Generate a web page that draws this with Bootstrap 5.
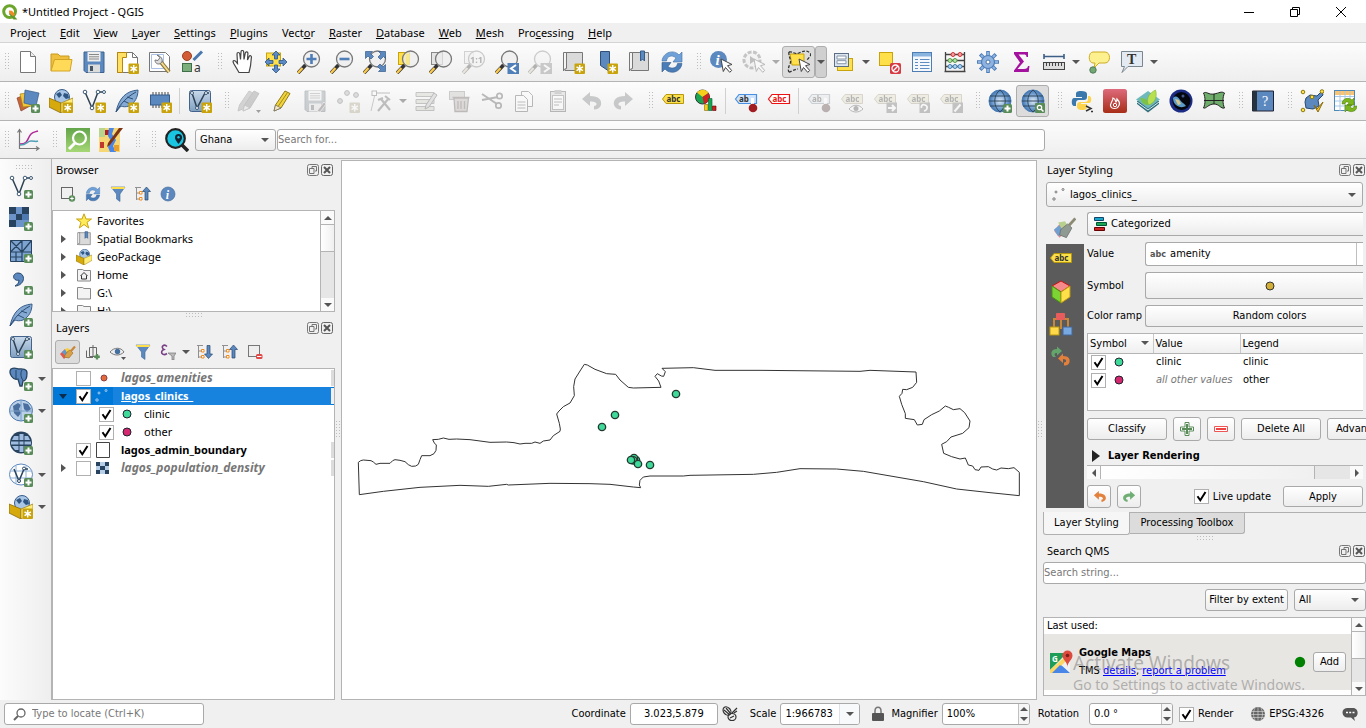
<!DOCTYPE html>
<html lang="en">
<head>
<meta charset="utf-8">
<meta name="viewport" content="width=device-width, initial-scale=1">
<title>*Untitled Project - QGIS</title>
<link href="https://cdn.jsdelivr.net/npm/bootstrap@5.3.0/dist/css/bootstrap.min.css" rel="stylesheet">
<style>
:root{--edge:#b4b4b4;--dotv:repeating-linear-gradient(#bdbdbd 0 1px,transparent 1px 3px);--doth:repeating-linear-gradient(90deg,#bdbdbd 0 1px,transparent 1px 3px)}
body{font:11px/18px "Noto Sans","Open Sans",sans-serif;color:#000;background:#f0f0f0}
button,input,select,table{font:inherit;color:inherit}
.ui,.ui button,.ui input,.ui select{font-family:"DejaVu Sans Condensed","DejaVu Sans",sans-serif}
svg{display:block;flex:none}
.i24{width:24px;height:24px}
.i16{width:16px;height:16px}
.i12{width:12px;height:12px}
.off{filter:grayscale(.8);opacity:.34}
.titlebar{height:23px;background:#fff;padding-left:2px}
.titlebar .cap{width:46px;height:23px;border:0;background:none;padding:0}
.titlebar .cap:last-child{margin-right:2px}
.menus{height:20px;border-bottom:1px solid #d4d4d4;padding-left:3px}
.menus a{color:#000;text-decoration:none;padding:0 7px}
.tools{height:39px;border-bottom:1px solid var(--edge);background:linear-gradient(#fcfcfc,#eee)}
.tools.third{height:38px}
.tb{width:33px;height:32px;border:1px solid transparent;border-radius:3px;background:none;padding:0;display:flex;align-items:center;justify-content:center;flex:none}
.tb.small-tb{width:25px;height:24px}
.tb.down{background:#dcdcdc;border-color:#adadad}
.arr{width:12px;height:32px;border:1px solid transparent;background:none;padding:0;display:flex;align-items:center;justify-content:center;flex:none}
.arr::before,.tri::before{content:"";border:4px solid transparent;border-top-color:#555;border-bottom:0}
.arr.dim::before{border-top-color:#aaa}
.arr.down{background:#d0d0d0;border-color:#adadad;border-radius:3px}
.grip{width:16px;height:18px;flex:none;background:var(--dotv) 9px 0/1px 18px no-repeat,var(--dotv) 12px 0/1px 18px no-repeat}
.grip.first{width:11px;background-position:5px 0,8px 0}
.grip.wide{width:17px}
.dots{height:4px;width:16px;background:var(--doth) 0 0/16px 1px no-repeat,var(--doth) 0 3px/16px 1px no-repeat}
.vdots{width:4px;height:18px;background:var(--dotv) 0 0/1px 18px no-repeat,var(--dotv) 3px 0/1px 18px no-repeat}
.vsep{width:1px;height:26px;background:#d0d0d0;margin:0 3px;flex:none}
.side{width:52px;border-right:1px solid var(--edge);background:linear-gradient(90deg,#fcfcfc,#eee);padding-top:6px}
.side .line{height:32px;padding-left:4px}
.side .arr{margin-left:-1px}
.dock-l{width:283px}
.dock-r{width:323px}
.dockhead{height:22px;padding:0 2px 0 4px}
.dockhead button{border:0;background:none;padding:0;width:12px;height:12px}
.dockhead .pair{display:flex;gap:2px;margin-left:auto}
.dock-r .dockhead{padding-right:1px;font-family:"Noto Sans","Open Sans",sans-serif}
.smallbar{height:29px;padding:0 0 3px 3px}
.well{background:#fff;border:1px solid var(--edge)}
.trow{height:18px;display:flex;align-items:center;white-space:nowrap;gap:3px}
.trow label,.trow .cap-t{padding-left:2px}
.tw{width:20px;display:flex;justify-content:center;flex:none}
.tw::before{content:"";border:4px solid transparent;border-left:5px solid #555;border-right:0}
.tw.none::before{visibility:hidden}
.tw.open::before{border:4px solid transparent;border-top:5px solid #0b2c4d;border-bottom:0}
.chk{appearance:none;width:15px;height:15px;border:1px solid #b0b0b0;background:#fff center/11px 11px no-repeat;margin:0;flex:none}
.chk:checked{background-image:url("data:image/svg+xml,%3Csvg xmlns='http://www.w3.org/2000/svg' viewBox='0 0 11 11'%3E%3Cpath d='M1.5 5.2l2.8 4L9.5 1' fill='none' stroke='%23000' stroke-width='2'/%3E%3C/svg%3E")}
.tag{width:3px;height:16px;background:#dcdcdc;margin-left:auto;flex:none}
.sel{background:#0078d7;color:#fff}
.sel .nm{background:#1883de;flex:1;height:18px}
.sel .tag{background:#f0f0f0;margin-left:-3px}
.mut{color:#777;font-style:italic}
.trow .mut{font-size:12px}
.gb{background:linear-gradient(#fff,#ededed);border:1px solid #a9a9a9;border-radius:3px;padding:0;white-space:nowrap}
.fld{background:#fff;border:1px solid #a9a9a9;border-radius:3px;display:flex;align-items:center;overflow:hidden}
.fld input{border:0;background:none;outline:0;min-width:0;padding:0 4px;width:100%}
.fld input::placeholder{color:#777;opacity:1}
.pick{border:0;background:none;appearance:none;outline:0;padding:0;flex:1;min-width:0}
.tri{display:flex;width:20px;justify-content:center;flex:none}
.cut{border-right:0;border-top-right-radius:0;border-bottom-right-radius:0}
.under{padding-left:30px}
.sb{background:#e6e6e6;display:flex;flex:none}
.sb.v{width:14px;flex-direction:column;border-left:1px solid var(--edge)}
.sb.h{height:14px;border-top:1px solid var(--edge)}
.sb button{border:0;background:#fafafa;padding:0;width:13px;height:13px;display:flex;align-items:center;justify-content:center;flex:none}
.sb .thumb{background:linear-gradient(90deg,#fff,#f0f0f0)}
.sb.v .thumb{border-top:1px solid var(--edge);border-bottom:1px solid var(--edge);height:28px}
.sb.h .thumb{border-left:1px solid var(--edge);border-right:1px solid var(--edge);width:78%}
.up::before{content:"";border:4px solid transparent;border-bottom:4px solid #555;border-top:0}
.dn::before{content:"";border:4px solid transparent;border-top:4px solid #555;border-bottom:0}
.lf::before{content:"";border:4px solid transparent;border-right:4px solid #555;border-left:0}
.rt::before{content:"";border:4px solid transparent;border-left:4px solid #555;border-right:0}
.form-col{gap:6px;padding:5px 3px 0 3px;min-width:0}
.form-col>*{flex-shrink:0}
.form-col .cap-l{width:58px;flex:none}
.fold-t::before{content:"";border:6px solid transparent;border-left:8px solid #222;border-right:0;margin:0 8px 0 5px}
.cls{border-collapse:collapse;width:100%;table-layout:fixed}
.cls th{font-weight:400;height:19px;padding:0 2px;background:linear-gradient(#fff,#efefef);border-bottom:1px solid var(--edge);line-height:17px}
.cls th+th{border-left:1px solid #c8c8c8}
.cls td{height:18px;padding:0 3px;line-height:16px;white-space:nowrap}
.strip{width:38px;flex:none}
.dark{background:#5b5b5b}
.dark .line{height:32px;padding-right:8px}
.tabs button{border:1px solid #b0b0b0;border-top:0;padding:0;height:21px}
.tabs{border-top:1px solid #b0b0b0;margin-top:4px}
.tabs .on{background:#f6f6f6;height:23px;margin-top:-1px;border-radius:0 0 3px 3px;width:87px}
.tabs .offt{background:#dcdcdc;border-left:0;border-radius:0 0 3px 0;width:115px}
.qitem{background:#e8e6e3;height:56px;line-height:18px}
.qitem a{color:#00f}
.wm{position:absolute;left:29px;top:33px;color:rgba(120,120,120,.52);font-family:"Noto Sans","Open Sans",sans-serif;pointer-events:none;white-space:nowrap}
.wm .big{font-size:19px;line-height:24px}
.wm .sml{font-size:14px;line-height:20px}
.spin{width:13px;border-left:1px solid #c0c0c0;align-self:stretch}
.spin button{border:0;background:#f6f6f6;padding:0;flex:1;display:flex;align-items:center;justify-content:center}
.status{height:28px}
.status .fld{height:22px}
.w-pt{width:88px;margin-left:4px}
</style>
</head>
<body>
<svg width="0" height="0" class="position-absolute" aria-hidden="true">
<linearGradient id="gb1" x1="0" y1="0" x2="0" y2="1"><stop offset="0" stop-color="#c9d9ea"/><stop offset="1" stop-color="#7f9fc0"/></linearGradient>
<linearGradient id="gr1" x1="0" y1="0" x2="0" y2="1"><stop offset="0" stop-color="#de6a7c"/><stop offset="1" stop-color="#a82d17"/></linearGradient>
<linearGradient id="gg1" x1="0" y1="0" x2="0" y2="1"><stop offset="0" stop-color="#63a54a"/><stop offset="1" stop-color="#a6d775"/></linearGradient>
<radialGradient id="sph"><stop offset="0" stop-color="#dfe9f4"/><stop offset=".6" stop-color="#7ba7d6"/><stop offset="1" stop-color="#3f73ae"/></radialGradient>
</svg>
<svg class="d-none" aria-hidden="true">
<symbol id="plus" viewBox="0 0 24 24"><rect x="15" y="15" width="9" height="9" rx="1.5" fill="#5a8c5a"/><path d="M19.5 16.5v6M16.5 19.5h6" stroke="#fff" stroke-width="2"/></symbol>
<symbol id="new" viewBox="0 0 24 24"><rect x="13.5" y="13.5" width="10.500" height="10.500" rx="1" fill="#c8a30c"/><path d="M18.7 15v7.500M15.500 16.800l6.400 3.900M21.900 16.800l-6.400 3.900" stroke="#fff" stroke-width="1.500"/></symbol>
<symbol id="cur" viewBox="0 0 24 24"><path d="M12 9l11 5.500-4.500 1.200 4.200 4.800-2 1.800-4.200-4.800-2.200 4z" fill="#fff" stroke="#444"/></symbol>
<symbol id="lens" viewBox="0 0 24 24"><path d="M1 23l7.500-8" stroke="#333" stroke-width="3.600"/><path d="M1 23l4.500-5" stroke="#fcc94a" stroke-width="2.400"/><circle cx="14.500" cy="9" r="8" fill="#eee" fill-opacity=".75" stroke="#777" stroke-width="1.300"/></symbol>
<symbol id="logo" viewBox="0 0 16 16"><circle cx="7.600" cy="7.600" r="5.900" fill="none" stroke="#6ba52c" stroke-width="3"/><path d="M8 8l7.500 7.500h-4L7 10z" fill="#5f9a2a"/><path d="M7 6.500l3 .2 3 3.500-2 2-4-3.500z" fill="#f08b24"/></symbol>
<symbol id="doc" viewBox="0 0 24 24"><path d="M4.500 1.500h10l5 5v16h-15z" fill="#fff" stroke="#777"/><path d="M14.500 1.500v5h5" fill="#eee" stroke="#777"/></symbol>
<symbol id="folder" viewBox="0 0 24 24"><path d="M2 20.500V4h7l2 2h9v14.500z" fill="#efc03d" stroke="#c99a1b"/><path d="M5.500 9.500H23l-2 11.500H2z" fill="#ffda59" stroke="#d3a423"/></symbol>
<symbol id="save" viewBox="0 0 24 24"><path d="M2 2h20v20.500H4l-2-2z" fill="#5b88bf" stroke="#3f628c"/><rect x="5.500" y="2" width="13" height="9.500" fill="#eee"/><path d="M7 4.500h10M7 6.800h10M7 9h10" stroke="#888"/><rect x="6" y="14.500" width="12" height="8" fill="#dcdcdc"/><rect x="8" y="16" width="3" height="5" fill="#456"/></symbol>
<symbol id="layout" viewBox="0 0 24 24"><path d="M2.500 2.500h15l5 5v15h-20z" fill="#fff" stroke="#777"/><path d="M2.500 2.500h9v5h-4v15h-5z" fill="#ffe066" stroke="#b8860b"/><path d="M17.500 2.500v5h5" fill="none" stroke="#777"/><use href="#new"/></symbol>
<symbol id="lman" viewBox="0 0 24 24"><path d="M1.500 2.500h16l4 4v15h-20z" fill="#fff" stroke="#777"/><path d="M3.500 4.500h12v14h-12z" fill="none" stroke="#a9c1e6"/><path d="M12 11l9 11" stroke="#8a7440" stroke-width="4"/><path d="M13 12l8 10" stroke="#f2dc8a" stroke-width="2"/><path d="M9 5l3 2.500-2 3L7 10c0 4 4 5 6 3s2-6-4-8z" fill="#ddd" stroke="#777"/></symbol>
<symbol id="style" viewBox="0 0 24 24"><circle cx="6" cy="6" r="4.500" fill="#d15c35" stroke="#9a3f20"/><path d="M12.500 10L21 1.500" stroke="#4a78ad" stroke-width="3"/><rect x="1.500" y="13.500" width="9" height="8" fill="#7cae7c" stroke="#3f6f4a"/><text x="13" y="22" font-size="12" font-family="Noto Sans,sans-serif" fill="#333">a</text></symbol>
<symbol id="hand" viewBox="0 0 24 24"><path d="M8 22.500L3 14c-1-2-1.500-3 0-3.500 1.500-.2 2.500 2 3.500 3L6 4c0-2 2.500-2 2.800 0l.7 5.500L10 2c0-2 2.600-2 2.700 0l.3 7.500L14.300 3c.3-1.800 2.700-1.500 2.600.3L16.500 10l1.600-3.500c.8-1.400 2.500-.7 2.300.8L19.500 16l-1.500 6.500z" fill="#fff" stroke="#444" stroke-width="1.200"/></symbol>
<symbol id="pan" viewBox="0 0 24 24"><rect x="2.500" y="3" width="14" height="13" fill="#ffe04a" stroke="#c8a30c"/><path d="M12 1l4 4h-2.500v4h-3V5H8zM12 23l4-4h-2.500v-4h-3v4H8zM1 12l4-4v2.500h4v3H5V16zM23 12l-4-4v2.500h-4v3h4V16z" fill="#5b8ac6" stroke="#2f5683" stroke-width=".8"/></symbol>
<symbol id="zin" viewBox="0 0 24 24"><use href="#lens"/><path d="M14.500 4v10M9.500 9h10" stroke="#4f7db5" stroke-width="2.600"/></symbol>
<symbol id="zout" viewBox="0 0 24 24"><use href="#lens"/><path d="M9.500 9h10" stroke="#4f7db5" stroke-width="2.600"/></symbol>
<symbol id="zfull" viewBox="0 0 24 24"><use href="#lens"/><path d="M2.500 1.500h7l-2 2 3 3-2.500 2.500-3-3-2.500 2.500zM22.500 1.500v7l-2-2-3 3L15 7l3-3-2.500-2.500zM22.500 21.500h-7l2-2-3-3L17 14l3 3 2.500-2.500z" fill="#5b88bf" stroke="#365c8a" stroke-width=".7"/></symbol>
<symbol id="zsel" viewBox="0 0 24 24"><rect x="2.500" y="2.500" width="11" height="12" fill="#ffe04a" stroke="#c8a30c"/><use href="#lens"/><path d="M10 4h3.500v10.500H10z" fill="#f7e68a"/></symbol>
<symbol id="zlay" viewBox="0 0 24 24"><rect x="2.500" y="2.500" width="11" height="12" fill="#e4e4e4" stroke="#888"/><use href="#lens"/></symbol>
<symbol id="znat" viewBox="0 0 24 24"><rect x="2.500" y="1.500" width="9" height="12" fill="#eee" stroke="#888"/><use href="#lens"/><text x="8" y="12.500" font-size="9" font-weight="700" font-family="Noto Sans,sans-serif" fill="#333">1:1</text></symbol>
<symbol id="zlast" viewBox="0 0 24 24"><use href="#lens"/><rect x="12.500" y="13" width="11.500" height="11" fill="#4f7fb8"/><path d="M21 15l-5 3.500 5 3.500" fill="none" stroke="#fff" stroke-width="2"/></symbol>
<symbol id="znext" viewBox="0 0 24 24"><use href="#lens"/><rect x="12.500" y="13" width="11.500" height="11" fill="#777"/><path d="M16 15l5 3.500-5 3.500" fill="none" stroke="#fff" stroke-width="2"/></symbol>
<symbol id="book" viewBox="0 0 24 24"><path d="M4 2.500h17.500v18H4z" fill="#dadada" stroke="#777"/><path d="M2.500 2.500h3v16c-1.500 0-3 1-3 2.500z" fill="#f4f4f4" stroke="#777"/></symbol>
<symbol id="bkm" viewBox="0 0 24 24"><use href="#book"/><path d="M13.500 1h4v10l-2-2-2 2z" fill="#5b88bf" stroke="#365c8a"/></symbol>
<symbol id="bknew" viewBox="0 0 24 24"><use href="#book"/><use href="#new"/></symbol>
<symbol id="rib" viewBox="0 0 24 24"><path d="M6.500 1.500h9v20l-9-6z" fill="#5b88bf" stroke="#2f4f78"/><use href="#new"/></symbol>
<symbol id="refresh" viewBox="0 0 24 24"><path d="M2 11C3 2 14-1 19 5l3-3v10h-9l3-4C12 4.500 7 6 6.500 11z" fill="#6fa0d8" stroke="#3f6ea5" stroke-width=".6"/><path d="M22 13.500c-1 9-12 11.500-17 5.500l-3 3v-9.500h9l-3 4c4 3 9 1.500 9.500-3z" fill="#4a7db8" stroke="#335c8c" stroke-width=".6"/></symbol>
<symbol id="info" viewBox="0 0 24 24"><circle cx="12" cy="12" r="10.500" fill="#5b88bf" stroke="#44699a"/><text x="8.500" y="19" font-size="18" font-style="italic" font-weight="700" font-family="Liberation Serif,serif" fill="#fff">i</text></symbol>
<symbol id="ident" viewBox="0 0 24 24"><circle cx="9.500" cy="9.500" r="8.500" fill="#5b88bf"/><text x="6.500" y="15" font-size="15" font-style="italic" font-weight="700" font-family="Liberation Serif,serif" fill="#fff">i</text><use href="#cur"/></symbol>
<symbol id="gear" viewBox="0 0 24 24"><path d="M12 1v22M1 12h22M4.200 4.200l15.600 15.600M19.800 4.200L4.200 19.800" stroke="#4d7db8" stroke-width="3.600"/><path d="M12 2v20M2 12h20M5 5l14 14M19 5L5 19" stroke="#8fb3e0" stroke-width="2"/><circle cx="12" cy="12" r="6.500" fill="#8fb3e0" stroke="#4d7db8" stroke-width="1.200"/><circle cx="12" cy="12" r="2" fill="#fff" stroke="#4a72a5"/></symbol>
<symbol id="act" viewBox="0 0 24 24"><circle cx="10" cy="10" r="8" fill="#eee" stroke="#666" stroke-width="3" stroke-dasharray="4 1.500"/><path d="M8 6l6 4-6 4z" fill="#555"/><use href="#cur"/></symbol>
<symbol id="select" viewBox="0 0 24 24"><path d="M3 4h14v11H5z" fill="#ffe04a" stroke="#c8a30c"/><path d="M2 2c4-1 6 3 10 1s8-3 11 0-4 6-3 8M2 22c2 0 5-3 9-3M2 2c-1 4 3 8 1 12s-2 7-1 8" fill="none" stroke="#333" stroke-width="1.300" stroke-dasharray="3 1.500"/><use href="#cur"/></symbol>
<symbol id="selval" viewBox="0 0 24 24"><rect x="5.500" y="8.500" width="15" height="12" fill="#ffe04a" stroke="#c8a30c"/><rect x="2.500" y="3.500" width="14" height="13" fill="#dde5ee" stroke="#5a6f86"/><path d="M5 6h9v3H5zM5 10.700h9v3H5z" fill="#fff" stroke="#8797a8"/></symbol>
<symbol id="desel" viewBox="0 0 24 24"><rect x="2.500" y="2.500" width="13" height="13" fill="#ffe04a" stroke="#c8a30c"/><rect x="13" y="13" width="11" height="11" rx="1.500" fill="#d63a45"/><circle cx="18.500" cy="18.500" r="3.500" fill="none" stroke="#fff" stroke-width="1.300"/><path d="M16 21l5-5" stroke="#fff" stroke-width="1.300"/></symbol>
<symbol id="tbl" viewBox="0 0 24 24"><rect x="2.500" y="2.500" width="19" height="19" fill="#f4f8fc" stroke="#4d7db3"/><path d="M3 3h18v3.500H3z" fill="#8ab4e0"/><path d="M5 9.500h3M10 9.500h9.500M5 12.500h3M10 12.500h9.500M5 15.500h3M10 15.500h9.500M5 18.500h3M10 18.500h9.500" stroke="#5f8cc0"/></symbol>
<symbol id="abac" viewBox="0 0 24 24"><path d="M2.500 2v20M21.500 2v20M3 4.500h18M3 10.500h18M3 16.500h18M1.500 21.500h21" stroke="#444" stroke-width="1.300" fill="none"/><g><g fill="#ff9a9a" stroke="#c33"><circle cx="10" cy="4.500" r="2"/><circle cx="17" cy="4.500" r="2"/></g><g fill="#aee3a0" stroke="#5a9a4c"><circle cx="7" cy="10.500" r="2"/><circle cx="12" cy="10.500" r="2"/></g><g fill="#a8d4f2" stroke="#447bb0"><circle cx="7" cy="16.500" r="2"/><circle cx="12" cy="16.500" r="2"/><circle cx="17" cy="16.500" r="2"/></g></g></symbol>
<symbol id="sigma" viewBox="0 0 24 24"><path d="M5 2h14v5h-1.500c0-2-1-2.500-3-2.500H9.500l5.500 7L8.500 19H15c2.500 0 3.500-.7 4-3h1.500l-.8 6H5v-1.500l6-8L5 4z" fill="#a5119f"/></symbol>
<symbol id="ruler" viewBox="0 0 24 24"><path d="M2 6.500h20M2 4v5M22 4v5" stroke="#3d5f86" stroke-width="1.600"/><rect x="1.500" y="12.500" width="21" height="7" fill="#ddd" stroke="#444"/><path d="M4.500 13v3M7.500 13v3M10.500 13v3M13.500 13v3M16.500 13v3M19.500 13v3" stroke="#444"/></symbol>
<symbol id="tip" viewBox="0 0 24 24"><path d="M6 2h12c6 0 6 11 0 11h-6l-5 5 1-5H6c-5 0-5-11 0-11z" fill="#fdf18f" stroke="#cdab22"/><circle cx="6" cy="20" r="3.200" fill="#72a875" stroke="#527a55"/></symbol>
<symbol id="annot" viewBox="0 0 24 24"><path d="M1.500 1.500h21v15H8l-6 6 2.500-6h-3z" fill="#e3eaf1" stroke="#7a8791"/><text x="7" y="14" font-size="14" font-weight="700" font-family="Liberation Serif,serif" fill="#333">T</text></symbol>
<symbol id="dsm" viewBox="0 0 24 24"><path d="M1 9l10-4 3 12-9 5z" fill="#c8643a" stroke="#8a4426" stroke-width=".7"/><path d="M4 5l12-2 1 14-10 1z" fill="#f0c63c" stroke="#a48316" stroke-width=".7"/><path d="M9 1l14 3-3 13-12-3z" fill="#5b88bf" stroke="#365c8a" stroke-width=".7"/><use href="#plus"/></symbol>
<symbol id="gpkg" viewBox="0 0 24 24"><circle cx="13" cy="8" r="7.500" fill="#a9c6e6" stroke="#365c8a"/><path d="M7 5l4-2 2 3-3 3zM15 4l4 1 1 4-3 1-3-3z" fill="#2f5683"/><path d="M0 9l12 5v10L0 18z" fill="#d6a90d" stroke="#8a6c08" stroke-width=".8"/><path d="M12 14l12-5v8l-12 7z" fill="#ffed7a" stroke="#a48316" stroke-width=".8"/></symbol>
<symbol id="gpkgn" viewBox="0 0 24 24"><use href="#gpkg"/><use href="#new"/></symbol>
<symbol id="vec" viewBox="0 0 24 24"><path d="M3 3l7 16L16 3h6" fill="none" stroke="#2d4255" stroke-width="1.500"/><g fill="#fff" stroke="#3d5a75"><circle cx="3" cy="3" r="1.800"/><circle cx="10" cy="19" r="1.800"/><circle cx="16" cy="3" r="1.800"/><circle cx="22" cy="3" r="1.500"/></g></symbol>
<symbol id="vecn" viewBox="0 0 24 24"><use href="#vec"/><use href="#new"/></symbol>
<symbol id="vecp" viewBox="0 0 24 24"><use href="#vec"/><use href="#plus"/></symbol>
<symbol id="feather" viewBox="0 0 24 24"><path d="M1 23C4 9 11 2 23 1c0 7-3 13-9 16-3 1-6 1-8 0z" fill="#84a9d3" stroke="#3a5f8c"/><path d="M1 23C6 14 12 8 21 3M9 12l6 3M12 8l6 2" fill="none" stroke="#2d4d74"/></symbol>
<symbol id="feathn" viewBox="0 0 24 24"><use href="#feather"/><use href="#new"/></symbol>
<symbol id="feathp" viewBox="0 0 24 24"><use href="#feather"/><use href="#plus"/></symbol>
<symbol id="chip" viewBox="0 0 24 24"><path d="M5 3v16M8 3v16M11 3v16M14 3v16M17 3v16M20 3v16" stroke="#444"/><rect x="2.500" y="6" width="19" height="10" fill="#5b88bf" stroke="#365c8a"/><use href="#new"/></symbol>
<symbol id="virt" viewBox="0 0 24 24"><rect x="1.500" y="1.500" width="21" height="21" rx="2" fill="url(#gb1)" stroke="#44638a"/><path d="M4 4l5 15L17 4h4" fill="none" stroke="#2d4255" stroke-width="1.500"/><g fill="#fff" stroke="#3d5a75"><circle cx="4" cy="4" r="1.500"/><circle cx="9" cy="19" r="1.500"/><circle cx="18" cy="4" r="1.500"/></g></symbol>
<symbol id="virtn" viewBox="0 0 24 24"><use href="#virt"/><use href="#new"/></symbol>
<symbol id="virtp" viewBox="0 0 24 24"><use href="#virt"/><use href="#plus"/></symbol>
<symbol id="pen" viewBox="0 0 24 24"><path d="M4 22l1.500-6L15 2l5 2.500L11 19z" fill="#f1d33c" stroke="#8e7a1a"/><path d="M4 22l1.500-6 5.500 3z" fill="#f7e7c6" stroke="#666" stroke-width=".7"/><path d="M8 17.500L17.500 3.500" stroke="#a38c1f"/></symbol>
<symbol id="pens" viewBox="0 0 24 24"><path d="M1 22l1.500-6L12 2l5 2.500L8 19z" fill="#a58f8f" stroke="#777"/><path d="M6 22l1.500-6L17 2l5 2.500L13 19z" fill="#8a7a7a" stroke="#666"/><path d="M6 22l1.500-6 5.500 3z" fill="#ddd" stroke="#777"/><path d="M19 21h5l-2.500 3z" fill="#000"/></symbol>
<symbol id="savee" viewBox="0 0 24 24"><use href="#save"/><path d="M14 22l7-9 2 2-6 8z" fill="#844" stroke="#fff" stroke-width=".6"/></symbol>
<symbol id="pts" viewBox="0 0 24 24"><g fill="#aaa" stroke="#555"><circle cx="4" cy="12" r="2.400"/><circle cx="11" cy="4" r="2.400"/><circle cx="20" cy="6" r="2.400"/></g><use href="#new"/></symbol>
<symbol id="vtool" viewBox="0 0 24 24"><path d="M6 4h15" stroke="#555"/><path d="M2 22l4-17" fill="none" stroke="#777"/><rect x="3" y="2" width="4.500" height="4.500" fill="#fff" stroke="#555"/><path d="M9 22L20 9M12 10l9 11M9 11l5-2M16 7l5 4" stroke="#555" stroke-width="2.200"/></symbol>
<symbol id="rowsed" viewBox="0 0 24 24"><path d="M2 3.500h18v4H2zM2 10.500h18v4H2zM2 17.500h18v4H2z" fill="#c9c9a0" stroke="#666"/><path d="M11 20l1-4 8-12 3 2-8 12z" fill="#bbb" stroke="#444"/></symbol>
<symbol id="trash" viewBox="0 0 24 24"><rect x="2.500" y="2.500" width="15" height="8" fill="#bba" stroke="#777"/><path d="M5.500 8.500h17M7 9l1 13.500h12L21.500 9zM11 12v8M14 12v8M17.500 12v8" fill="#c9a0a0" stroke="#844" stroke-width="1.300"/></symbol>
<symbol id="cut" viewBox="0 0 24 24"><path d="M2 5l15 10M2 11l16-3" stroke="#444" stroke-width="2"/><circle cx="19.500" cy="7" r="2.700" fill="none" stroke="#444" stroke-width="1.700"/><circle cx="18.500" cy="16.500" r="2.700" fill="none" stroke="#444" stroke-width="1.700"/></symbol>
<symbol id="copy" viewBox="0 0 24 24"><path d="M8.500 2.500h7l4 4v11h-11z" fill="#fff" stroke="#444"/><path d="M2.500 6.500h8l4 4v12h-12z" fill="#fff" stroke="#444"/><path d="M4.500 13h8M4.500 16h8M4.500 19h8" stroke="#555"/></symbol>
<symbol id="paste" viewBox="0 0 24 24"><rect x="4.500" y="2.500" width="15" height="20" fill="#ccc" stroke="#444"/><rect x="6.500" y="6.500" width="11" height="14" fill="#fff" stroke="#666"/><rect x="8.500" y="1" width="7" height="4" fill="#888"/><path d="M8 10h8M8 13h8M8 16h5" stroke="#555"/></symbol>
<symbol id="undo" viewBox="0 0 24 24"><path d="M3 10l8-7v4c9 0 12 4 11 9-1 3-4 4.500-7 4.500V17c4 0 4-5-4-4.500V17z" fill="currentColor"/></symbol>
<symbol id="redo" viewBox="0 0 24 24"><path d="M21 10l-8-7v4C4 7 1 11 2 16c1 3 4 4.500 7 4.500V17c-4 0-4-5 4-4.500V17z" fill="currentColor"/></symbol>
<symbol id="lab" viewBox="0 0 24 24"><path d="M1.500 10L5 5.500h17.500v9H5z" fill="#fbe04a" stroke="#b8980f"/><text x="5.500" y="13" font-size="8" font-weight="700" font-family="Noto Sans,sans-serif" fill="#333">abc</text></symbol>
<symbol id="labr" viewBox="0 0 24 24"><path d="M1.500 10L5 5.500h17.500v9H5z" fill="#fff" stroke="#e11" stroke-width="1.200"/><text x="5.500" y="13" font-size="8" font-weight="700" font-family="Noto Sans,sans-serif" fill="#e11">abc</text></symbol>
<symbol id="labb" viewBox="0 0 24 24"><path d="M1.500 10L5 5.500h17.500v9H5z" fill="#cfe3fb" stroke="#4a90e2" stroke-width="1.200"/><text x="5" y="13" font-size="8" font-weight="700" font-family="Noto Sans,sans-serif" fill="#333">ab</text><path d="M18.500 9v7" stroke="#fff" stroke-width="3"/><circle cx="19" cy="19" r="4.300" fill="#a11d22"/></symbol>
<symbol id="labeye" viewBox="0 0 24 24"><use href="#lab"/><path d="M9 20c4-5 10-5 14 0-4 4-10 4-14 0z" fill="#fff" stroke="#444"/><circle cx="16" cy="19.500" r="2.500" fill="#444"/></symbol>
<symbol id="labmv" viewBox="0 0 24 24"><use href="#lab"/><rect x="13.500" y="13.500" width="10.500" height="10.500" fill="#666"/><path d="M15 19h7M19 16l3 3-3 3" fill="none" stroke="#fff" stroke-width="2"/></symbol>
<symbol id="labrot" viewBox="0 0 24 24"><use href="#lab"/><rect x="13.500" y="13.500" width="10.500" height="10.500" fill="#666"/><path d="M18 22c4-1 4-5 1-6s-4 1-3.500 3" fill="none" stroke="#fff" stroke-width="1.700"/></symbol>
<symbol id="labch" viewBox="0 0 24 24"><use href="#lab"/><rect x="13.500" y="13.500" width="10.500" height="10.500" fill="#666"/><path d="M15.500 22.500l6-7" stroke="#fff" stroke-width="2"/></symbol>
<symbol id="diag" viewBox="0 0 24 24"><circle cx="8.500" cy="8" r="7" fill="#19a552" stroke="#333"/><path d="M8.500 8L3 3.500C6-.500 12-.300 14.500 4z" fill="#f6cf1a"/><path d="M8.500 8l6-4c2 4 1 9-4.500 11z" fill="#c22"/><path d="M10.500 15.500h3.500v6h-3.500z" fill="#f6cf1a" stroke="#8a6c08" stroke-width=".6"/><path d="M14.500 9.500H18v12h-3.500z" fill="#19a552" stroke="#063" stroke-width=".6"/><path d="M18.500 17H22v4.500h-3.500z" fill="#c22" stroke="#600" stroke-width=".6"/></symbol>
<symbol id="gl" viewBox="0 0 24 24"><circle cx="12" cy="12" r="11" fill="url(#sph)" stroke="#4a7db8"/><path d="M2 7h20M1 12h22M2 17h20M12 1C5 6 5 18 12 23M12 1c7 5 7 17 0 22" fill="none" stroke="#31485f"/></symbol>
<symbol id="gladd" viewBox="0 0 24 24"><use href="#gl"/><use href="#plus"/></symbol>
<symbol id="glsr" viewBox="0 0 24 24"><use href="#gl"/><rect x="14" y="14" width="10" height="10" rx="1" fill="#5a8c5a"/><circle cx="18.500" cy="18.500" r="2.200" fill="none" stroke="#fff" stroke-width="1.200"/><path d="M20 20l2.500 2.500" stroke="#fff" stroke-width="1.500"/></symbol>
<symbol id="py" viewBox="0 0 24 24"><path d="M11 2c-4 0-5 1-5 3v3h6v1H4c-3 0-3 8 0 8h2v-3c0-2 1-3 3-3h5c2 0 3-1 3-3V5c0-2-2-3-6-3z" fill="#3b78ac"/><path d="M12 21c4 0 5-1 5-3v-3h-6v-1h8c3 0 3-7 0-7h-1v3c0 2-1 3-3 3h-5c-2 0-3 1-3 3v2c0 2 2 3 5 3z" fill="#fcd34a"/><path d="M16 17l5 2.500-5 2.500M21 22.500h2" fill="none" stroke="#333" stroke-width="1.500"/></symbol>
<symbol id="fire" viewBox="0 0 24 24"><rect width="24" height="24" rx="2.500" fill="url(#gr1)"/><path d="M8 18c-2-4 2-5 2-9 3 1 2 3 3 4 1-1 1-2 1-3 3 3 3 6 1 8-1 2-6 2-7 0z" fill="none" stroke="#fff" stroke-width="1.200"/><circle cx="12" cy="16" r="1.700" fill="none" stroke="#fff"/></symbol>
<symbol id="leaf" viewBox="0 0 24 24"><path d="M1 12v3l11 8.500L23 15v-3z" fill="#2f6f7b"/><path d="M1 13l11 8 11-8" fill="none" stroke="#d8eef0"/><path d="M0 10.500L12 2l12 8.500L12 19.500z" fill="#6fb9bd"/><path d="M12 16C7 16 5 13 4.500 9c5 0 8 2 7.500 7z" fill="#7cc24a"/><path d="M12.500 16c-3-7 1-12 7-15 2 6 0 13-7 15z" fill="#b6e04f" stroke="#7fb62e" stroke-width=".6"/></symbol>
<symbol id="earth" viewBox="0 0 24 24"><circle cx="12" cy="12" r="11.500" fill="#1c2c84"/><circle cx="12.500" cy="12" r="9" fill="#05070f"/><path d="M4 9c3-3 5-1 7 2s4 3 6 6c-5 3-13 0-13-8z" fill="#5a9bc9"/><path d="M6 10l4 1 2 4-3 1z" fill="#d9c58a"/><circle cx="14" cy="7" r="1.500" fill="#445a8c"/></symbol>
<symbol id="bow" viewBox="0 0 24 24"><path d="M1.500 4c3-2 5 2 10.500 1s7-3 10.500-1c-2 4-2 11 0 15-4 1-5-4-10.500-4S4 20 1.500 19c2-4 2-11 0-15z" fill="#6fad6b" stroke="#222"/><path d="M2 11.500h20M12 5v10" stroke="#222"/></symbol>
<symbol id="help" viewBox="0 0 24 24"><path d="M1.500 2h21v20h-21z" fill="#5b88bf" stroke="#223"/><path d="M1.500 2H6v20H1.500z" fill="#27323f"/><text x="11" y="17" font-size="14" font-family="Liberation Serif,serif" fill="#fff">?</text></symbol>
<symbol id="topo" viewBox="0 0 24 24"><path d="M6 9l4-3 7 1 5-5 1 4-5 5 1 6-6 3-7-1-1-6z" fill="#5b88bf" stroke="#27496f"/><g fill="#ffe04a" stroke="#8a7a10"><circle cx="3" cy="3" r="1.800"/><circle cx="12" cy="8" r="1.800"/><circle cx="22" cy="2.500" r="1.800"/><circle cx="3" cy="21" r="1.800"/></g><path d="M14 16l3 4 6-7-5 10z" fill="#f8c52c" stroke="#8a6c08"/></symbol>
<symbol id="tref" viewBox="0 0 24 24"><rect x="1.500" y="1.500" width="20" height="20" fill="#fff" stroke="#4d88b8"/><path d="M2 2h19v4H2z" fill="#ffc46b"/><path d="M2 7.500h19M2 12h20M2 17h20M7 2v20M12 2v20M17 2v20" stroke="#a9c8e6"/><path d="M9 15c0-6 7-7 10-4l2-2v7h-7l2-2c-2-2-4-1-4 1zM24 17c0 6-7 7-10 4l-2 2v-7h7l-2 2c2 2 4 1 4-1z" fill="#7ab51d" stroke="#4c7a0b" stroke-width=".5"/></symbol>
<symbol id="plot" viewBox="0 0 24 24"><path d="M3.500 2v18.500H22M1.500 4.500l2-3 2 3M20 18.500l3 2-3 2" fill="none" stroke="#777" stroke-width="1.200"/><path d="M4 16c9 0 7-6 11-10 2-2 4-2 7-3" fill="none" stroke="#b02a9a" stroke-width="1.500"/><path d="M4 17c7 0 7-4 11-4s5 1 7 0" fill="none" stroke="#4f9fb5" stroke-width="1.500"/></symbol>
<symbol id="green" viewBox="0 0 24 24"><rect width="24" height="24" fill="url(#gg1)"/><circle cx="13.500" cy="10" r="6.500" fill="none" stroke="#fff" stroke-width="2.200"/><path d="M9 15l-6 6" stroke="#fff" stroke-width="3"/></symbol>
<symbol id="osm" viewBox="0 0 24 24"><rect width="21" height="24" fill="#f7d774"/><path d="M0 0h6v9H0z" fill="#b9d48c"/><path d="M6 2h4v5H6z" fill="#a22"/><path d="M10 0h5l-2 6 4 6-3 6 3 6h-6l-2-5 3-6-3-5z" fill="#4a86e8"/><path d="M1 14h4v6H1z" fill="#c0392b"/><path d="M15 17h5v6h-5z" fill="#e9a02c"/><path d="M24 0L11 17l-3 2 1-4L20 0z" fill="#7d3415"/></symbol>
<symbol id="qsearch" viewBox="0 0 24 24"><path d="M17 17l6 6" stroke="#222" stroke-width="3.500"/><circle cx="10.500" cy="10.500" r="9.300" fill="#19c6e2" stroke="#222" stroke-width="2.200"/><path d="M13.500 16c-3-4-3.500-5-3.500-6.500a3.500 3.500 0 017 0c0 1.500-.5 2.500-3.500 6.500z" fill="#123"/><circle cx="13.500" cy="9.300" r="1.200" fill="#19c6e2"/></symbol>
<symbol id="rast" viewBox="0 0 24 24"><path d="M0 0h20v20H0z" fill="#6b93c7"/><path d="M0 0h7v7H0zM13 0h7v7h-7zM7 7h6v6H7zM0 13h7v7H0z" fill="#27435f"/><path d="M13 7h7v6h-7z" fill="#4d79b0"/></symbol>
<symbol id="rastp" viewBox="0 0 24 24"><use href="#rast"/><use href="#plus"/></symbol>
<symbol id="mesh" viewBox="0 0 24 24"><path d="M1.500 1.500h21v21h-21z" fill="#7da3d0" stroke="#27435f"/><path d="M1.500 13h21M13 1.500v21M1.500 1.500L13 13M13 1.500L1.500 13M22.500 1.500L13 13M1.500 18H13M7 13v10" fill="none" stroke="#27435f" stroke-width="1.200"/><use href="#plus"/></symbol>
<symbol id="comma" viewBox="0 0 24 24"><path d="M9 2C5 2 3 6 6 8.500c2 1.500 4 .5 4 .5 0 3-2 5-4 6 5 0 8.500-4 8.500-7.500C14.500 4 12 2 9 2z" fill="#5b88bf" stroke="#27496f"/><use href="#plus"/></symbol>
<symbol id="pg" viewBox="0 0 24 24"><path d="M2 2c4-2 6 0 8 0s8-1 8 4-1 8-4 8l-1 5h-2l-2-7C4 14-1 6 2 2z" fill="#5b88bf" stroke="#27435f" stroke-width="1.300"/><path d="M7 3v9M13 3c-2 3-1 8 1 10" fill="none" stroke="#27435f"/><use href="#plus"/></symbol>
<symbol id="globe2" viewBox="0 0 24 24"><ellipse cx="12" cy="11.500" rx="11.500" ry="10.500" fill="#b9d0e8" stroke="#4d79b0"/><path d="M4 7l5-3 3 2-2 4 2 4-3 4-4-4zM14 4l5 1 3 5-4 3-3-3z" fill="#4a6f9e"/><path d="M1 12h22M12 1v21" stroke="#7b9fc6"/><use href="#plus"/></symbol>
<symbol id="globe3" viewBox="0 0 24 24"><circle cx="12" cy="11.500" r="11" fill="#27435f"/><path d="M5 5h4.500v4H3zM10.500 3h4v6h-4zM15.500 5H19l2 4h-5.500zM2 10.500h7.500v3H2zM10.500 10.500h4v3h-4zM15.500 10.500H22v3h-6.500zM3 15h6.500v4H6zM10.500 15h4v6h-4zM15.500 15H21l-2 4h-3.500z" fill="#9fbce0"/><use href="#plus"/></symbol>
<symbol id="wfs" viewBox="0 0 24 24"><ellipse cx="12" cy="11.500" rx="11.500" ry="10.500" fill="#fff" stroke="#5b88bf"/><path d="M1 8h22M1 15h22M7 2v19M17 2v19" stroke="#8fb0d6" fill="none"/><path d="M5 6l5 12 5-12h4" fill="none" stroke="#27435f" stroke-width="1.500"/><circle cx="10" cy="18" r="1.500" fill="#fff" stroke="#27435f"/><circle cx="15" cy="5.500" r="1.500" fill="#fff" stroke="#27435f"/><use href="#plus"/></symbol>
<symbol id="float" viewBox="0 0 12 12"><rect x=".5" y=".5" width="11" height="11" rx="2" fill="none" stroke="#777"/><path d="M5 4.500v-2h4.500V7H8M2.500 4.500H7V9.500H2.500z" fill="none" stroke="#666" stroke-width=".9"/></symbol>
<symbol id="x" viewBox="0 0 12 12"><rect x=".5" y=".5" width="11" height="11" rx="2" fill="none" stroke="#666"/><path d="M3 3l6 6M9 3l-6 6" stroke="#555" stroke-width="2"/></symbol>
<symbol id="addsq" viewBox="0 0 16 16"><rect x="1.500" y="1.500" width="11" height="11" fill="none" stroke="#666"/><circle cx="12" cy="12.500" r="3.200" fill="#5a8c5a"/><path d="M12 10.700v3.600M10.200 12.500h3.600" stroke="#fff"/></symbol>
<symbol id="remsq" viewBox="0 0 16 16"><rect x="1.500" y="1.500" width="11" height="11" fill="#eee" stroke="#777"/><rect x="9" y="10" width="6.500" height="5" rx="1.500" fill="#e04848"/><path d="M10 12.500h4.500" stroke="#fff"/></symbol>
<symbol id="funnel" viewBox="0 0 16 16"><path d="M1 1h14L10 8v7.500L6.500 13V8z" fill="#5b88bf" stroke="#44699a" stroke-width=".6"/><path d="M1 1h14l-1 2H2z" fill="#ffe04a"/></symbol>
<symbol id="colup" viewBox="0 0 16 16"><path d="M0 1.500h6M1.500 2v12M2 13h3M2 7h3" stroke="#777" stroke-width=".8"/><path d="M4.500 5.500h2.500v2.500H4.500zM4.500 11.500h2.500v2.500H4.500z" fill="#fff" stroke="#f28a1c"/><path d="M11.500 1l4 4.500h-2.500V14h-3V5.500H7.500z" fill="#5b88bf" stroke="#27496f" stroke-width=".7"/></symbol>
<symbol id="expdn" viewBox="0 0 16 16"><path d="M0 1.500h6M1.500 2v12M2 13h3M2 7h3" stroke="#777" stroke-width=".8"/><path d="M4.500 5.500h2.500v2.500H4.500zM4.500 11.500h2.500v2.500H4.500z" fill="#fff" stroke="#f28a1c"/><path d="M11.500 14.500l4-4.500h-2.500V1.500h-3V10H7.500z" fill="#5b88bf" stroke="#27496f" stroke-width=".7"/></symbol>
<symbol id="starf" viewBox="0 0 16 16"><path d="M8 .8l2 5.200h5.500L11 9.300l1.700 5.700L8 11.500 3.300 15 5 9.300.5 6H6z" fill="#ffec5c" stroke="#c8a30c"/></symbol>
<symbol id="fold" viewBox="0 0 16 16"><path d="M1.500 14V2.500h5l1.500 1h6.500V14z" fill="#f3f3f3" stroke="#888"/></symbol>
<symbol id="home" viewBox="0 0 16 16"><use href="#fold"/><path d="M4.500 9L8 5.500 11.500 9M5.500 8.500V12h5V8.500" fill="none" stroke="#333"/></symbol>
<symbol id="brush" viewBox="0 0 16 16"><path d="M0 10l5-5 3 6-4 4z" fill="#e2574c"/><path d="M2 8l4-3 5 5-4 4z" fill="#5b9bd5"/><path d="M5 5l3-1 5 5-4 4z" fill="#f6cf3a"/><path d="M7 8l3-2 3 3-4 5-5-1z" fill="#d9a04a" stroke="#9a6a24" stroke-width=".6"/><path d="M11 7l4-4.500" stroke="#c98636" stroke-width="2.200"/></symbol>
<symbol id="brushg" viewBox="0 0 16 16"><path d="M0 10l4-5 4 6-4 4z" fill="#d98a8a"/><path d="M0 9l4-3 3 5-4 3z" fill="#6f9fd0"/><path d="M3 4l5-1 3 5-4 3z" fill="#b7cf8f"/><path d="M5 9l5-4 3 3-4 7-5-2z" fill="#8f9a92" stroke="#666" stroke-width=".5"/><path d="M11 6l4.500-5" stroke="#8b8b75" stroke-width="2"/></symbol>
<symbol id="grp" viewBox="0 0 16 16"><path d="M4.500 3.500h7v9h-7zM8 1v11M1.500 6.500v7H8" fill="none" stroke="#666"/><path d="M12 10v5.500M9.200 12.700h5.600" stroke="#5a8c5a" stroke-width="2.400"/></symbol>
<symbol id="eye" viewBox="0 0 16 16"><path d="M0 8c4-5 11-5 14 0-4 4-10 4-14 0z" fill="#eee" stroke="#777"/><circle cx="7.500" cy="7.500" r="2.700" fill="#456f9f"/><path d="M11 13h5l-2.500 3z" fill="#555"/></symbol>
<symbol id="eps" viewBox="0 0 16 16"><path d="M7 2.500C4-.5 0 3 4 5.500-.5 7 2 13 7 9.500" fill="none" stroke="#7a3f86" stroke-width="1.600"/><path d="M8 9h8l-2 3v4h-2v-4z" fill="#bbb" stroke="#777" stroke-width=".7"/></symbol>
<symbol id="ptsl" viewBox="0 0 16 16"><g fill="none" stroke="currentColor"><circle cx="3" cy="12" r="1.200"/><circle cx="5" cy="5" r="1"/><circle cx="12" cy="2.500" r="1"/></g></symbol>
<symbol id="cube" viewBox="0 0 24 24"><path d="M12 1l9 5-9 6-9-6z" fill="#f58a8a" stroke="#c11"/><path d="M3 6l9 6v11l-9-6z" fill="#7ed334" stroke="#4a8f12"/><path d="M21 6l-9 6v11l9-6z" fill="#ffe04a" stroke="#b8980f"/></symbol>
<symbol id="brs3" viewBox="0 0 24 24"><path d="M12 8v9M5 16V7h14v9" stroke="#c98636" stroke-width="2" fill="none"/><rect x="7" y="1" width="9" height="7" rx="1" fill="#e85c5c"/><rect x="1" y="15" width="9" height="8" fill="#ffd94a" stroke="#b8980f"/><rect x="14" y="15" width="9" height="8" fill="#78a9e0" stroke="#44699a"/></symbol>
<symbol id="hist" viewBox="0 0 24 24"><path d="M13 7L8 2.500V5C2 5 1 10 4 13h3C5 11 5 9 8 9v2.500z" fill="#63a56b"/><path d="M9 14.500l5-5V12c6 0 7 3 6.500 6s-3.500 3.500-5.500 3.500v-3c3 0 3-3.500-1-3.500v4z" fill="#e2803c"/></symbol>
<symbol id="cat" viewBox="0 0 16 16"><path d="M1.500 1.500h9v3h-9z" fill="#19a5c9" stroke="#146"/><path d="M3.500 6.500h10v3h-10z" fill="#19a552" stroke="#053"/><path d="M1.500 11.500h10v3h-10z" fill="#c22" stroke="#600"/></symbol>
<symbol id="gmap" viewBox="0 0 24 24"><path d="M1 3h20v20H1z" fill="#f1f1f1"/><path d="M1 3h17L1 20z" fill="#1f9d57"/><path d="M2 23l9-9 10 9z" fill="#4a86e8"/><path d="M1 20L18 5l2 3L5 23H1z" fill="#fdd663"/><path d="M3 23l8-8 9 8z" fill="#4a86e8"/><text x="3" y="11.500" font-size="8" font-weight="700" font-family="Noto Sans,sans-serif" fill="#fff">G</text><path d="M18.500 17c0-5-5-7-5-11.500a5 5 0 0110 0C23.500 10 18.500 12 18.500 17z" fill="#dd4b3e"/><circle cx="18.500" cy="5.500" r="1.800" fill="#7d1f17"/></symbol>
<symbol id="lock" viewBox="0 0 12 16"><path d="M3 8V5c0-5 6-5 6 0v3" fill="none" stroke="#777" stroke-width="1.500"/><rect y="7" width="12" height="8" rx="1" fill="#555"/></symbol>
<symbol id="msg" viewBox="0 0 16 16"><path d="M5 2h6c6 0 6 9 1 9.500L13 15l-4-3.500H5C-1 11-1 2 5 2z" fill="#555"/><path d="M4 6.500h2M7.200 6.500h2M10.500 6.500h2" stroke="#fff" stroke-width="1.700"/></symbol>
<symbol id="mouse" viewBox="0 0 16 16"><g fill="none" stroke="#333" stroke-width="1.200"><ellipse cx="5" cy="5" rx="3.500" ry="4.500" transform="rotate(-40 5 5)"/><ellipse cx="10" cy="11" rx="4" ry="3.500"/><path d="M2 4l6 5M4 2l5 6M8 12l4-2M10 7l5-5M12 7l3-2"/></g></symbol>
<symbol id="wgs" viewBox="0 0 16 16"><circle cx="8" cy="8" r="7" fill="#666"/><path d="M1 5.500h14M0 8.500h16M2 11.500h12M8 1v14M5 2c-2 4-2 8 0 12M11 2c2 4 2 8 0 12" fill="none" stroke="#ddd" stroke-width=".6"/></symbol>
</svg>

<div class="vh-100 d-flex flex-column overflow-hidden">
<header>
<div class="titlebar d-flex align-items-center">
<svg class="i16"><use href="#logo"/></svg><span class="ps-1">*Untitled Project - QGIS</span>
<div class="ms-auto d-flex">
<button class="cap" aria-label="Minimize"><svg class="i12 mx-auto" viewBox="0 0 12 12"><path d="M1 6.500h10" stroke="#000"/></svg></button>
<button class="cap" aria-label="Restore"><svg class="i12 mx-auto" viewBox="0 0 12 12"><path d="M1.500 3.500h7v7h-7zM3.500 3V1.500h7v7H9" fill="none" stroke="#000"/></svg></button>
<button class="cap" aria-label="Close"><svg class="i12 mx-auto" viewBox="0 0 12 12"><path d="M1 1l10 10M11 1L1 11" stroke="#000"/></svg></button>
</div>
</div>
<nav class="menus d-flex align-items-center" aria-label="Main menu">
<a href="#">Pro<u>j</u>ect</a><a href="#"><u>E</u>dit</a><a href="#"><u>V</u>iew</a><a href="#"><u>L</u>ayer</a><a href="#"><u>S</u>ettings</a><a href="#"><u>P</u>lugins</a><a href="#">Vect<u>o</u>r</a><a href="#"><u>R</u>aster</a><a href="#"><u>D</u>atabase</a><a href="#"><u>W</u>eb</a><a href="#"><u>M</u>esh</a><a href="#">Pro<u>c</u>essing</a><a href="#"><u>H</u>elp</a>
</nav>
<div class="tools d-flex align-items-center" role="toolbar" aria-label="Project and map navigation">
<span class="grip first"></span>
<button class="tb" aria-label="New project"><svg class="i24"><use href="#doc"/></svg></button>
<button class="tb" aria-label="Open"><svg class="i24"><use href="#folder"/></svg></button>
<button class="tb" aria-label="Save"><svg class="i24"><use href="#save"/></svg></button>
<button class="tb" aria-label="New layout"><svg class="i24"><use href="#layout"/></svg></button>
<button class="tb" aria-label="Layout manager"><svg class="i24"><use href="#lman"/></svg></button>
<button class="tb" aria-label="Style manager"><svg class="i24"><use href="#style"/></svg></button>
<span class="grip wide"></span>
<button class="tb" aria-label="Pan"><svg class="i24"><use href="#hand"/></svg></button>
<button class="tb" aria-label="Pan to selection"><svg class="i24"><use href="#pan"/></svg></button>
<button class="tb" aria-label="Zoom in"><svg class="i24"><use href="#zin"/></svg></button>
<button class="tb" aria-label="Zoom out"><svg class="i24"><use href="#zout"/></svg></button>
<button class="tb" aria-label="Zoom full"><svg class="i24"><use href="#zfull"/></svg></button>
<button class="tb" aria-label="Zoom to selection"><svg class="i24"><use href="#zsel"/></svg></button>
<button class="tb" aria-label="Zoom to layer"><svg class="i24"><use href="#zlay"/></svg></button>
<button class="tb off" aria-label="Zoom native"><svg class="i24"><use href="#znat"/></svg></button>
<button class="tb" aria-label="Zoom last"><svg class="i24"><use href="#zlast"/></svg></button>
<button class="tb off" aria-label="Zoom next"><svg class="i24"><use href="#znext"/></svg></button>
<button class="tb" aria-label="New map view"><svg class="i24"><use href="#bknew"/></svg></button>
<button class="tb" aria-label="New bookmark"><svg class="i24"><use href="#rib"/></svg></button>
<button class="tb" aria-label="Show bookmarks"><svg class="i24"><use href="#bkm"/></svg></button>
<button class="tb" aria-label="Refresh"><svg class="i24"><use href="#refresh"/></svg></button>
<span class="grip"></span>
<button class="tb" aria-label="Identify"><svg class="i24"><use href="#ident"/></svg></button>
<button class="tb off" aria-label="Run action"><svg class="i24"><use href="#act"/></svg></button><button class="arr dim" aria-label="Actions"></button>
<button class="tb down" aria-label="Select features"><svg class="i24"><use href="#select"/></svg></button><button class="arr down" aria-label="Selection modes"></button>
<button class="tb" aria-label="Select by value"><svg class="i24"><use href="#selval"/></svg></button><button class="arr" aria-label="Select by"></button>
<button class="tb" aria-label="Deselect"><svg class="i24"><use href="#desel"/></svg></button>
<button class="tb" aria-label="Attribute table"><svg class="i24"><use href="#tbl"/></svg></button>
<button class="tb" aria-label="Field calculator"><svg class="i24"><use href="#abac"/></svg></button>
<button class="tb" aria-label="Toolbox"><svg class="i24"><use href="#gear"/></svg></button>
<button class="tb" aria-label="Statistics"><svg class="i24"><use href="#sigma"/></svg></button>
<button class="tb" aria-label="Measure"><svg class="i24"><use href="#ruler"/></svg></button><button class="arr" aria-label="Measure modes"></button>
<button class="tb" aria-label="Map tips"><svg class="i24"><use href="#tip"/></svg></button>
<button class="tb" aria-label="Annotation"><svg class="i24"><use href="#annot"/></svg></button><button class="arr" aria-label="Annotation types"></button>
</div>
<div class="tools d-flex align-items-center" role="toolbar" aria-label="Layers, editing and plugins">
<span class="grip first"></span>
<button class="tb" aria-label="Data source manager"><svg class="i24"><use href="#dsm"/></svg></button>
<button class="tb" aria-label="New GeoPackage"><svg class="i24"><use href="#gpkgn"/></svg></button>
<button class="tb" aria-label="New shapefile"><svg class="i24"><use href="#vecn"/></svg></button>
<button class="tb" aria-label="New SpatiaLite"><svg class="i24"><use href="#feathn"/></svg></button>
<button class="tb" aria-label="New scratch layer"><svg class="i24"><use href="#chip"/></svg></button>
<span class="vsep"></span>
<button class="tb" aria-label="New virtual layer"><svg class="i24"><use href="#virtn"/></svg></button>
<span class="grip"></span>
<button class="tb off" aria-label="Current edits"><svg class="i24"><use href="#pens"/></svg></button>
<button class="tb" aria-label="Toggle editing"><svg class="i24"><use href="#pen"/></svg></button>
<button class="tb off" aria-label="Save edits"><svg class="i24"><use href="#savee"/></svg></button>
<button class="tb off" aria-label="Add point"><svg class="i24"><use href="#pts"/></svg></button>
<button class="tb off" aria-label="Vertex tool"><svg class="i24"><use href="#vtool"/></svg></button><button class="arr dim" aria-label="Vertex modes"></button>
<button class="tb off" aria-label="Modify attributes"><svg class="i24"><use href="#rowsed"/></svg></button>
<button class="tb off" aria-label="Delete selected"><svg class="i24"><use href="#trash"/></svg></button>
<button class="tb off" aria-label="Cut"><svg class="i24"><use href="#cut"/></svg></button>
<button class="tb off" aria-label="Copy"><svg class="i24"><use href="#copy"/></svg></button>
<button class="tb off" aria-label="Paste"><svg class="i24"><use href="#paste"/></svg></button>
<button class="tb off text-secondary" aria-label="Undo"><svg class="i24"><use href="#undo"/></svg></button>
<button class="tb off text-secondary" aria-label="Redo"><svg class="i24"><use href="#redo"/></svg></button>
<span class="grip"></span>
<button class="tb" aria-label="Labeling"><svg class="i24"><use href="#lab"/></svg></button>
<button class="tb" aria-label="Diagrams"><svg class="i24"><use href="#diag"/></svg></button>
<span class="vsep"></span>
<button class="tb" aria-label="Pinned labels"><svg class="i24"><use href="#labb"/></svg></button>
<button class="tb" aria-label="Unplaced labels"><svg class="i24"><use href="#labr"/></svg></button>
<span class="vsep"></span>
<button class="tb off" aria-label="Pin labels"><svg class="i24"><use href="#labb"/></svg></button>
<button class="tb off" aria-label="Show labels"><svg class="i24"><use href="#labeye"/></svg></button>
<button class="tb off" aria-label="Move label"><svg class="i24"><use href="#labmv"/></svg></button>
<button class="tb off" aria-label="Rotate label"><svg class="i24"><use href="#labrot"/></svg></button>
<button class="tb off" aria-label="Change label"><svg class="i24"><use href="#labch"/></svg></button>
<span class="grip"></span>
<button class="tb" aria-label="Add QMS"><svg class="i24"><use href="#gladd"/></svg></button>
<button class="tb down" aria-label="Search QMS"><svg class="i24"><use href="#glsr"/></svg></button>
<span class="grip"></span>
<button class="tb" aria-label="Python console"><svg class="i24"><use href="#py"/></svg></button>
<button class="tb" aria-label="Campfire"><svg class="i24"><use href="#fire"/></svg></button>
<button class="tb" aria-label="Leaf layers"><svg class="i24"><use href="#leaf"/></svg></button>
<button class="tb" aria-label="Earth engine"><svg class="i24"><use href="#earth"/></svg></button>
<button class="tb" aria-label="Profile"><svg class="i24"><use href="#bow"/></svg></button>
<span class="grip"></span>
<button class="tb" aria-label="Help contents"><svg class="i24"><use href="#help"/></svg></button>
<span class="grip"></span>
<button class="tb" aria-label="Topology checker"><svg class="i24"><use href="#topo"/></svg></button>
<button class="tb" aria-label="Table refresh"><svg class="i24"><use href="#tref"/></svg></button>
</div>
<div class="tools third d-flex align-items-center ui" role="toolbar" aria-label="Search">
<span class="grip first"></span>
<button class="tb" aria-label="Plot"><svg class="i24"><use href="#plot"/></svg></button>
<span class="grip wide"></span>
<button class="tb" aria-label="OSM search"><svg class="i24"><use href="#green"/></svg></button>
<button class="tb" aria-label="OSM edit"><svg class="i24"><use href="#osm"/></svg></button>
<span class="grip"></span><span class="grip wide"></span>
<button class="tb" aria-label="Locate place"><svg class="i24"><use href="#qsearch"/></svg></button>
<div class="gb d-flex align-items-center" style="width:81px;height:22px;margin:0 1px 0 2px"><select class="pick ps-1" aria-label="Country"><option>Ghana</option></select><span class="tri"></span></div>
<div class="fld" style="width:56.2%;height:22px"><input class="ps-0" type="text" placeholder="Search for..." aria-label="Search for"></div>
</div>
</header>

<main class="d-flex flex-fill" style="min-height:0">
<aside class="side flex-shrink-0" aria-label="Manage layers">
<div class="dots ms-3" style="margin-bottom:2px"></div>
<div class="line d-flex align-items-center"><button class="tb" aria-label="Add vector"><svg class="i24"><use href="#vecp"/></svg></button></div>
<div class="line d-flex align-items-center"><button class="tb" aria-label="Add raster"><svg class="i24"><use href="#rastp"/></svg></button></div>
<div class="line d-flex align-items-center"><button class="tb" aria-label="Add mesh"><svg class="i24"><use href="#mesh"/></svg></button></div>
<div class="line d-flex align-items-center"><button class="tb" aria-label="Add delimited text"><svg class="i24"><use href="#comma"/></svg></button></div>
<div class="line d-flex align-items-center"><button class="tb" aria-label="Add SpatiaLite"><svg class="i24"><use href="#feathp"/></svg></button></div>
<div class="line d-flex align-items-center"><button class="tb" aria-label="Add virtual layer"><svg class="i24"><use href="#virtp"/></svg></button></div>
<div class="line d-flex align-items-center"><button class="tb" aria-label="Add PostGIS"><svg class="i24"><use href="#pg"/></svg></button><button class="arr" aria-label="Database layers"></button></div>
<div class="line d-flex align-items-center"><button class="tb" aria-label="Add WMS"><svg class="i24"><use href="#globe2"/></svg></button><button class="arr" aria-label="Web layers"></button></div>
<div class="line d-flex align-items-center"><button class="tb" aria-label="Add WCS"><svg class="i24"><use href="#globe3"/></svg></button></div>
<div class="line d-flex align-items-center"><button class="tb" aria-label="Add WFS"><svg class="i24"><use href="#wfs"/></svg></button><button class="arr" aria-label="Feature services"></button></div>
<div class="line d-flex align-items-center"><button class="tb" aria-label="New GeoPackage layer"><svg class="i24"><use href="#gpkgn"/></svg></button><button class="arr" aria-label="New layers"></button></div>
</aside>

<div class="dock-l d-flex flex-column flex-shrink-0">
<section>
<div class="dockhead d-flex align-items-center"><span>Browser</span><span class="pair"><button aria-label="Float"><svg class="i12"><use href="#float"/></svg></button><button aria-label="Close"><svg class="i12"><use href="#x"/></svg></button></span></div>
<div class="smallbar d-flex align-items-center">
<button class="tb small-tb" aria-label="Add"><svg class="i16"><use href="#addsq"/></svg></button><button class="tb small-tb" aria-label="Refresh"><svg class="i16"><use href="#refresh"/></svg></button><button class="tb small-tb" aria-label="Filter"><svg class="i16"><use href="#funnel"/></svg></button><button class="tb small-tb" aria-label="Collapse"><svg class="i16"><use href="#colup"/></svg></button><button class="tb small-tb" aria-label="Properties"><svg class="i16"><use href="#info"/></svg></button>
</div>
<div class="well d-flex" style="height:102px">
<div class="flex-fill overflow-hidden" style="padding-top:1px">
<div class="trow"><span class="tw none"></span><svg class="i16"><use href="#starf"/></svg><span class="cap-t">Favorites</span></div>
<div class="trow"><span class="tw"></span><svg class="i16"><use href="#bkm"/></svg><span class="cap-t">Spatial Bookmarks</span></div>
<div class="trow"><span class="tw"></span><svg class="i16"><use href="#gpkg"/></svg><span class="cap-t">GeoPackage</span></div>
<div class="trow"><span class="tw"></span><svg class="i16"><use href="#home"/></svg><span class="cap-t">Home</span></div>
<div class="trow"><span class="tw"></span><svg class="i16"><use href="#fold"/></svg><span class="cap-t">G:\</span></div>
<div class="trow"><span class="tw"></span><svg class="i16"><use href="#fold"/></svg><span class="cap-t">H:\</span></div>
</div>
<div class="sb v"><button class="up" aria-label="Scroll up"></button><span class="thumb"></span><button class="dn mt-auto" aria-label="Scroll down"></button></div>
</div>
</section>
<div class="dots mx-auto" style="margin:1px 0 0"></div>
<section class="d-flex flex-column flex-fill">
<div class="dockhead d-flex align-items-center"><span>Layers</span><span class="pair"><button aria-label="Float"><svg class="i12"><use href="#float"/></svg></button><button aria-label="Close"><svg class="i12"><use href="#x"/></svg></button></span></div>
<div class="smallbar d-flex align-items-center">
<button class="tb small-tb down" aria-label="Styling panel"><svg class="i16"><use href="#brush"/></svg></button><button class="tb small-tb" aria-label="Add group"><svg class="i16"><use href="#grp"/></svg></button><button class="tb small-tb" aria-label="Themes"><svg class="i16"><use href="#eye"/></svg></button><button class="tb small-tb" aria-label="Filter legend"><svg class="i16"><use href="#funnel"/></svg></button><button class="tb small-tb" aria-label="Filter by expression"><svg class="i16"><use href="#eps"/></svg></button><button class="arr h-100" aria-label="Expression options"></button><button class="tb small-tb" aria-label="Expand all"><svg class="i16"><use href="#expdn"/></svg></button><button class="tb small-tb" aria-label="Collapse all"><svg class="i16"><use href="#colup"/></svg></button><button class="tb small-tb" aria-label="Remove layer"><svg class="i16"><use href="#remsq"/></svg></button>
</div>
<div class="well flex-fill">
<div class="trow"><span class="tw none"></span><input class="chk" type="checkbox" id="l1"><svg class="i16" viewBox="0 0 16 16"><circle cx="10" cy="8" r="3" fill="#e4683e" stroke="#844"/></svg><label for="l1" class="mut fw-bold ps-2">lagos_amenities</label><span class="tag"></span></div>
<div class="trow sel"><span class="tw open"></span><input class="chk" type="checkbox" id="l2" checked><svg class="i16" style="color:#a9cdf0"><use href="#ptsl"/></svg><label for="l2" class="nm fw-bold ps-2"><u>lagos_clinics_</u></label><span class="tag"></span></div>
<div class="trow"><span class="tw none"></span><span class="tw none"></span><input class="chk" type="checkbox" id="l3" checked><svg class="i16" viewBox="0 0 16 16"><circle cx="10" cy="8" r="4" fill="#3fd999" stroke="#223"/></svg><label for="l3" class="ps-2">clinic</label></div>
<div class="trow"><span class="tw none"></span><span class="tw none"></span><input class="chk" type="checkbox" id="l4" checked><svg class="i16" viewBox="0 0 16 16"><circle cx="10" cy="8" r="4" fill="#d4286f" stroke="#223"/></svg><label for="l4" class="ps-2">other</label></div>
<div class="trow"><span class="tw none"></span><input class="chk" type="checkbox" id="l5" checked><svg class="i16" viewBox="0 0 16 16"><path d="M2.500.500h13v15h-13z" fill="#fff" stroke="#444"/></svg><label for="l5" class="fw-bold ps-2">lagos_admin_boundary</label><span class="tag"></span></div>
<div class="trow"><span class="tw"></span><input class="chk" type="checkbox" id="l6"><svg class="i16" viewBox="0 0 16 16"><path d="M2 2h4v4H2zM11 2h4v4h-4zM6 6h5v4H6zM2 10h4v4H2zM11 10h4v4h-4z" fill="#27435f"/><path d="M6 2h5v4H6zM2 6h4v4H2zM11 6h4v4h-4zM6 10h5v4H6z" fill="#b9cfe8"/></svg><label for="l6" class="mut fw-bold ps-2">lagos_population_density</label><span class="tag"></span></div>
</div>
</section>
</div>

<div class="d-flex align-items-center justify-content-center flex-shrink-0" style="width:6px"><span class="vdots"></span></div>
<div class="flex-fill well" style="min-width:0;margin-top:1px">
<svg class="w-100 h-100" viewBox="-24 -582 2082 1614" role="img" aria-label="Lagos map">
<path d="M25 322L32 317 40 315 63 317 70 321 78 328 90 325 120 325 128 317 135 314 150 316 165 320 175 329 185 334 197 333 205 328 210 314 215 302 240 302 252 296 258 286 259 270 253 264 248 254 265 253 280 249 297 253 320 252 360 254 420 262 470 261 492 263 510 267 525 265 545 265 555 261 570 265 580 258 600 255 610 242 630 229 631 222 628 205 620 177 627 168 640 155 660 144 673 122 671 95 675 72 690 48 703 28 712 30 735 43 770 56 797 58 810 75 835 97 850 99 933 97 926 78 915 64 922 56 934 63 941 64 946 50 936 40 1030 38 1095 46 1230 46 1530 49 1560 46 1698 51 1700 82 1688 97 1670 104 1658 103 1656 115 1648 124 1655 148 1666 176 1666 190 1693 194 1702 210 1717 208 1722 194 1745 179 1768 168 1786 153 1796 157 1810 164 1830 161 1844 173 1860 198 1857 218 1838 235 1803 246 1790 260 1775 268 1781 295 1805 305 1830 312 1846 309 1855 330 1868 333 1875 344 1887 346 1893 336 1915 335 1928 342 1940 345 1953 339 1975 341 1992 338 2008 352V422L1920 413 1820 402 1720 380 1540 349 1460 342 1350 341 1280 352 1210 358 1020 361 1000 363 900 363 880 366 870 376 868 390 872 398 850 396 780 388 720 386 600 385 475 390 470 388 415 394 330 391 210 397 100 409 28 419Z" fill="#fff" stroke="#333" stroke-width="3"/>
<g fill="#3fd999" stroke="#233a30" stroke-width="4"><circle cx="978" cy="117" r="11"/><circle cx="795" cy="180" r="11"/><circle cx="756" cy="216" r="11"/><circle cx="858" cy="315" r="11"/><circle cx="852" cy="309" r="11"/><circle cx="850" cy="316" r="11"/><circle cx="864" cy="327" r="11"/><circle cx="843" cy="315" r="11"/><circle cx="900" cy="330" r="11"/></g>
</svg>
</div>
<div class="d-flex align-items-center justify-content-center flex-shrink-0" style="width:6px"><span class="vdots"></span></div>

<div class="dock-r d-flex flex-column flex-shrink-0 ui">
<section>
<div class="dockhead d-flex align-items-center"><span>Layer Styling</span><span class="pair"><button aria-label="Float"><svg class="i12"><use href="#float"/></svg></button><button aria-label="Close"><svg class="i12"><use href="#x"/></svg></button></span></div>
<div class="gb d-flex align-items-center" style="height:25px;margin:1px 3px 0 3px"><svg class="i16" style="color:#777;margin:0 3px 0 4px"><use href="#ptsl"/></svg><select class="pick" aria-label="Layer"><option>lagos_clinics_</option></select><span class="tri"></span></div>
<div class="d-flex" style="height:301px;padding-left:3px">
<div class="strip d-flex flex-column">
<div class="d-flex align-items-center justify-content-center" style="height:37px;padding-top:4px"><svg style="width:22px;height:22px"><use href="#brushg"/></svg></div>
<div class="dark flex-fill">
<div class="line d-flex align-items-center justify-content-center"><svg class="i24"><use href="#lab"/></svg></div>
<div class="line d-flex align-items-center justify-content-center"><svg class="i24"><use href="#cube"/></svg></div>
<div class="line d-flex align-items-center justify-content-center"><svg class="i24"><use href="#brs3"/></svg></div>
<div class="line d-flex align-items-center justify-content-center"><svg class="i24"><use href="#hist"/></svg></div>
</div>
</div>
<div class="form-col d-flex flex-column flex-fill overflow-hidden">
<div class="gb cut d-flex align-items-center" style="height:24px"><svg class="i16" style="margin:0 2px 0 5px"><use href="#cat"/></svg><select class="pick" aria-label="Renderer"><option>Categorized</option></select></div>
<div class="d-flex align-items-center"><label class="cap-l" for="val">Value</label><div class="fld cut flex-fill" style="height:24px"><b class="ps-1" style="font-size:9px;color:#555">abc</b><input id="val" value="amenity"><span style="width:7px;border-left:1px solid #c0c0c0;align-self:stretch;flex:none"></span></div></div>
<div class="d-flex align-items-center"><span class="cap-l">Symbol</span><button class="gb cut under flex-fill" style="height:27px" aria-label="Change symbol"><svg class="i12 mx-auto" viewBox="0 0 12 12"><circle cx="6" cy="6" r="4" fill="#d4af37" stroke="#333"/></svg></button></div>
<div class="d-flex align-items-center"><span class="cap-l">Color ramp</span><button class="gb cut under flex-fill" style="height:22px">Random colors</button></div>
<div class="well border-end-0" style="height:78px">
<table class="cls"><colgroup><col style="width:65px"><col style="width:87px"><col></colgroup>
<thead><tr><th><span class="d-flex align-items-center">Symbol<span class="tri ms-auto" style="width:12px"></span></span></th><th>Value</th><th>Legend</th></tr></thead>
<tbody><tr><td><span class="d-flex align-items-center"><input type="checkbox" class="chk" checked aria-label="clinic"><svg class="i12" style="margin-left:7px" viewBox="0 0 12 12"><circle cx="6" cy="6" r="4" fill="#3fd999" stroke="#223"/></svg></span></td><td>clinic</td><td>clinic</td></tr>
<tr><td><span class="d-flex align-items-center"><input type="checkbox" class="chk" checked aria-label="other"><svg class="i12" style="margin-left:7px" viewBox="0 0 12 12"><circle cx="6" cy="6" r="4" fill="#d4286f" stroke="#223"/></svg></span></td><td class="mut">all other values</td><td>other</td></tr></tbody></table>
</div>
<div class="d-flex align-items-center" style="height:24px;gap:6px">
<button class="gb flex-shrink-0" style="width:80px;height:22px">Classify</button>
<button class="gb flex-shrink-0" style="width:28px;height:24px" aria-label="Add category"><svg class="i16 mx-auto" viewBox="0 0 16 16"><path d="M6 1.500h4V6h4.500v4H10v4.500H6V10H1.500V6H6z" fill="#fff" stroke="#5a8c5a"/><path d="M8 3v10M3 8h10" stroke="#5a8c5a" stroke-width="2"/></svg></button>
<button class="gb flex-shrink-0" style="width:28px;height:24px" aria-label="Remove category"><svg class="i16 mx-auto" viewBox="0 0 16 16"><path d="M1.500 5.500h13v5h-13z" fill="#fff" stroke="#e55"/><path d="M3 8h10" stroke="#e44" stroke-width="2"/></svg></button>
<button class="gb flex-shrink-0" style="width:80px;height:22px">Delete All</button>
<button class="gb flex-shrink-0 ps-2 text-start" style="width:80px;height:22px">Advanced</button>
</div>
<div>
<div class="fold-t d-flex align-items-center fw-bold" style="height:18px">Layer Rendering</div>
<div class="sb h"><button class="lf" aria-label="Scroll left"></button><span class="thumb"></span><button class="rt ms-auto" aria-label="Scroll right"></button></div>
</div>
<div class="d-flex align-items-center" style="height:23px;gap:6px">
<button class="gb" style="width:24px;height:23px;color:#e2803c" aria-label="Undo"><svg class="mx-auto" style="width:15px;height:15px"><use href="#undo"/></svg></button>
<button class="gb" style="width:24px;height:23px;color:#6fae74" aria-label="Redo"><svg class="mx-auto" style="width:15px;height:15px"><use href="#redo"/></svg></button>
<div class="d-flex align-items-center ms-auto gap-1"><input class="chk" type="checkbox" id="live" checked><label for="live">Live update</label></div>
<button class="gb" style="width:80px;height:21px;margin-left:6px">Apply</button>
</div>
</div>
</div>
<div class="tabs d-flex"><button class="on">Layer Styling</button><button class="offt">Processing Toolbox</button></div>
<div class="dots mx-auto" style="margin-top:1px"></div>
</section>
<section class="d-flex flex-column flex-fill">
<div class="dockhead d-flex align-items-center"><span>Search QMS</span><span class="pair"><button aria-label="Float"><svg class="i12"><use href="#float"/></svg></button><button aria-label="Close"><svg class="i12"><use href="#x"/></svg></button></span></div>
<div class="fld" style="height:22px"><input class="px-0" type="text" placeholder="Search string..." aria-label="Search string"></div>
<div class="d-flex justify-content-end align-items-center" style="margin:5px 0 6px;gap:6px"><button class="gb" style="width:83px;height:22px">Filter by extent</button><div class="gb d-flex align-items-center" style="width:72px;height:22px"><select class="pick ps-1" aria-label="Service type"><option>All</option></select><span class="tri"></span></div></div>
<div class="well d-flex position-relative flex-fill" style="margin-bottom:4px">
<div class="flex-fill">
<div style="height:16px;line-height:16px;padding-left:3px">Last used:</div>
<div class="qitem d-flex align-items-center"><svg class="i24" style="margin-left:5px;margin-right:6px"><use href="#gmap"/></svg><div><b>Google Maps</b><div>TMS <a href="#">details</a>, <a href="#">report a problem</a></div></div><svg class="i12 ms-auto" viewBox="0 0 12 12"><circle cx="6" cy="6" r="5.200" fill="#008000"/></svg><button class="gb" style="width:33px;height:20px;margin:0 5px 0 7px">Add</button></div>
</div>
<div class="sb v"><button class="up" aria-label="Scroll up"></button><span class="thumb"></span><button class="dn mt-auto" aria-label="Scroll down"></button></div>
<div class="wm"><div class="big">Activate Windows</div><div class="sml">Go to Settings to activate Windows.</div></div>
</div>
</section>
</div>
</main>

<footer class="status d-flex align-items-center ui">
<div class="fld" style="width:200px;margin-left:4px"><svg class="i16" viewBox="0 0 16 16" style="margin-left:7px"><circle cx="9" cy="7" r="4" fill="none" stroke="#666" stroke-width="1.300"/><path d="M6 10l-4 4" stroke="#666" stroke-width="2"/></svg><input type="text" placeholder="Type to locate (Ctrl+K)" aria-label="Locate"></div>
<label class="ms-auto" for="co">Coordinate</label><div class="fld w-pt"><input id="co" class="text-center" value="3.023,5.879"></div>
<svg class="i16" style="margin:0 12px 0 4px"><use href="#mouse"/></svg>
<label for="sc">Scale</label><div class="fld" style="width:80px;margin-left:4px"><input id="sc" value="1:966783"><button class="tri h-100 border-0 border-start p-0 align-items-center bg-light" aria-label="Scales"></button></div>
<svg style="width:12px;height:16px;margin:0 7px 0 12px"><use href="#lock"/></svg>
<label for="mg">Magnifier</label><div class="fld w-pt"><input id="mg" value="100%"><span class="spin d-flex flex-column"><button class="up" aria-label="Increase"></button><button class="dn" aria-label="Decrease"></button></span></div>
<label for="ro" style="margin-left:8px">Rotation</label><div class="fld" style="width:84px;margin-left:10px"><input id="ro" value="0.0 °"><span class="spin d-flex flex-column"><button class="up" aria-label="Increase"></button><button class="dn" aria-label="Decrease"></button></span></div>
<input class="chk" type="checkbox" id="rn" checked style="margin-left:6px"><label for="rn" class="ms-1">Render</label>
<svg class="i16" style="margin-left:17px;margin-right:3px"><use href="#wgs"/></svg><span>EPSG:4326</span>
<svg class="i16" style="margin:0 8px 0 18px"><use href="#msg"/></svg>
</footer>
</div>
<script src="https://cdn.jsdelivr.net/npm/bootstrap@5.3.0/dist/js/bootstrap.bundle.min.js"></script>
</body>
</html>
